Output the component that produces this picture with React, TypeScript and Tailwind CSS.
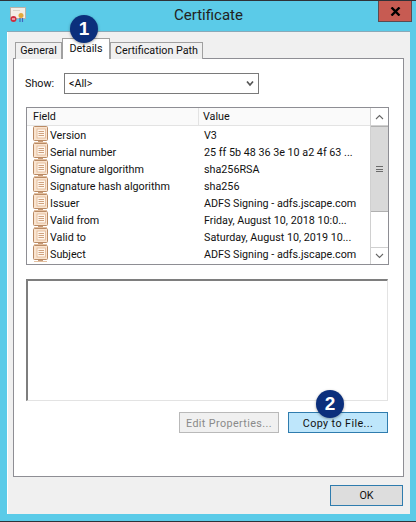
import React from "react";

const rows: [string, string][] = [
  ["Version", "V3"],
  ["Serial number", "25 ff 5b 48 36 3e 10 a2 4f 63 ..."],
  ["Signature algorithm", "sha256RSA"],
  ["Signature hash algorithm", "sha256"],
  ["Issuer", "ADFS Signing - adfs.jscape.com"],
  ["Valid from", "Friday, August 10, 2018 10:0..."],
  ["Valid to", "Saturday, August 10, 2019 10..."],
  ["Subject", "ADFS Signing - adfs.jscape.com"],
];

function FieldIcon() {
  return (
    <svg width="15" height="17" viewBox="0 0 15 17" className="shrink-0">
      <rect x="0.5" y="0.5" width="14" height="14" rx="1" fill="#fae4cf" stroke="#b98a64" />
      <rect x="4" y="3" width="8.5" height="9" fill="#fff6ec" stroke="#dfb492" strokeWidth="0.8" />
      <path d="M5.5 5.5h5.5M5.5 7.5h5.5M5.5 9.5h5.5" stroke="#cfa27f" />
      <path d="M5 15.5h5" stroke="#c59a78" />
      <path d="M1 16.5h13" stroke="#e3bf9f" />
    </svg>
  );
}

function Badge({ n, className }: { n: string; className: string }) {
  return (
    <div
      className={
        "absolute w-[28px] h-[28px] rounded-full bg-[#0b2f7c] text-white flex items-center justify-center text-[19px] font-bold shadow-[0_1px_3px_rgba(0,0,0,0.35)] font-['Liberation_Sans',sans-serif] " +
        className
      }
    >
      {n}
    </div>
  );
}

export default function App() {
  return (
    <div className="relative w-[416px] h-[522px] overflow-hidden bg-[#5bcbe8] border-t border-b border-[#2f3238] flex flex-col font-['Roboto',sans-serif] text-[10.75px] text-[#111]">
      <div className="h-[30px] shrink-0 relative flex items-start">
        <svg width="17" height="16" viewBox="0 0 17 16" className="mt-[6px] ml-[10px]">
          <rect x="0.5" y="0.5" width="15" height="11" fill="#f4eee6" stroke="#b9b2a8" />
          <rect x="3" y="3" width="7" height="1" fill="#d9d2c8" />
          <circle cx="3.5" cy="12" r="3" fill="#cf3040" />
          <path d="M2 12h3" stroke="#fff" />
          <circle cx="11" cy="8.5" r="2.5" fill="#e2a93b" />
          <path d="M10 11v4M12.5 11v4" stroke="#3f66c0" strokeWidth="1.2" />
        </svg>
        <div className="flex-1 text-center text-[15px] leading-[20px] mt-[4px] pl-[12px] text-[#222]">Certificate</div>
        <div className="w-[34px] h-[21px] mr-[4px] bg-[#c75b52] border border-[#5a4a50] border-t-0 flex items-center justify-center">
          <svg width="11" height="9" viewBox="0 0 11 9">
            <path d="M1.5 .5 L9.5 8.5 M9.5 .5 L1.5 8.5" stroke="#000" strokeWidth="2.4" />
          </svg>
        </div>
      </div>

      <div className="ml-[7px] w-[403px] h-[483px] bg-[#f0f0f0] pt-[7px] border-t border-[#8aa9b8] shadow-[inset_1px_0_0_#fff]">
        <div className="ml-[8px] h-[20px] flex items-end relative z-10 mb-[-1px]">
          <div className="w-[47px] h-[17px] bg-[#f0f0f0] border border-b-0 border-[#a0a0a0] flex items-center justify-center whitespace-nowrap">General</div>
          <div className="w-[48px] h-[21px] bg-white border border-b-0 border-[#a0a0a0] flex items-start justify-center pt-[2px] whitespace-nowrap">Details</div>
          <div className="w-[93px] h-[17px] bg-[#f0f0f0] border border-b-0 border-[#a0a0a0] flex items-center justify-center whitespace-nowrap">Certification Path</div>
        </div>

        <div className="mx-[6px] h-[419px] bg-white border border-[#8e8e94] px-[12px] pt-[14px]">
          <div className="flex items-center h-[21px]">
            <span className="w-[38px] ml-[-1px] mr-[1px] pt-[2px]">Show:</span>
            <div className="w-[195px] h-[21px] border border-[#7a7a7a] flex items-center justify-between pl-[4px] pr-[4px] bg-white">
              <span className="pt-[2px]">&lt;All&gt;</span>
              <svg width="8" height="7" viewBox="0 0 8 7">
                <path d="M1 1.5 L4 5 L7 1.5" fill="none" stroke="#555" strokeWidth="1.7" />
              </svg>
            </div>
          </div>

          <div className="mt-[13px] w-[363px] h-[158px] border border-[#8e8e94] flex bg-white">
            <div className="flex-1 min-w-0 overflow-hidden">
              <div className="h-[18px] flex border-b border-[#e3e3e3] bg-[#fafafa]">
                <div className="w-[172px] pl-[6px] border-r border-[#e3e3e3] leading-[17px]">Field</div>
                <div className="flex-1 pl-[4px] leading-[17px]">Value</div>
              </div>
              {rows.map(([f, v]) => (
                <div key={f} className="h-[17px] flex items-center">
                  <div className="w-[172px] flex items-center pl-[6px] gap-[2px]">
                    <FieldIcon />
                    <span className="whitespace-nowrap pt-[3px]">{f}</span>
                  </div>
                  <div className="flex-1 pl-[5px] whitespace-nowrap pt-[3px]">{v}</div>
                </div>
              ))}
            </div>
            <div className="w-[18px] shrink-0 border-l border-[#d0d0d0] flex flex-col bg-white">
              <div className="h-[18px] flex items-center justify-center border-b border-[#d0d0d0]">
                <svg width="9" height="6" viewBox="0 0 9 6">
                  <path d="M1 5 L4.5 1.5 L8 5" fill="none" stroke="#666" strokeWidth="1.1" />
                </svg>
              </div>
              <div className="h-[86px] bg-[#d9d9d9] border-y border-[#b0b0b0] flex items-center justify-center">
                <div className="w-[7px] h-[6px] border-y border-[#6a6a6a] flex items-center">
                  <div className="w-full h-px bg-[#6a6a6a]" />
                </div>
              </div>
              <div className="flex-1" />
              <div className="h-[17px] flex items-center justify-center border-t border-[#d0d0d0]">
                <svg width="9" height="6" viewBox="0 0 9 6">
                  <path d="M1 1 L4.5 4.5 L8 1" fill="none" stroke="#666" strokeWidth="1.1" />
                </svg>
              </div>
            </div>
          </div>

          <div className="mt-[14px] w-[362px] h-[122px] bg-white border border-[#e3e3e3] border-t-2 border-l-2 border-t-[#7e7e7e] border-l-[#7e7e7e]" />

          <div className="mt-[11px] w-[362px] flex justify-end gap-[9px]">
            <div className="w-[100px] h-[21px] bg-[#f0f0f0] border border-[#b9b9b9] text-[#8a8a8a] flex items-center justify-center pt-[3px] tracking-[0.4px]">Edit Properties...</div>
            <div className="w-[100px] h-[21px] bg-[#bee6fb] border border-[#2f7cae] flex items-center justify-center pt-[3px] tracking-[0.4px]">Copy to File...</div>
          </div>
        </div>

        <div className="mt-[8px] mr-[7px] flex justify-end">
          <div className="w-[73px] h-[21px] bg-[#dddddd] border border-[#2f7cae] flex items-center justify-center pt-[2px]">OK</div>
        </div>
      </div>

      <Badge n="1" className="left-[70px] top-[14px] z-20" />
      <Badge n="2" className="left-[316px] top-[389px] z-20" />
    </div>
  );
}
